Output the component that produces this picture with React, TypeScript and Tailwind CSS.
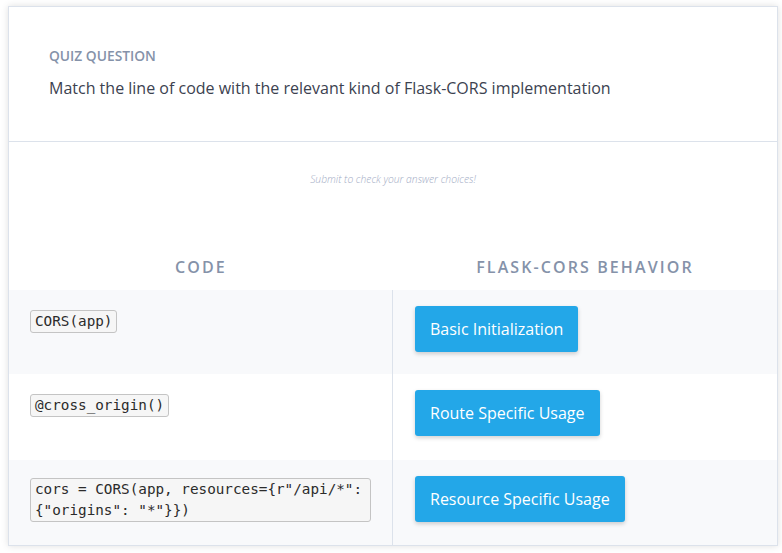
const rows = [
  { code: 'CORS(app)', answer: 'Basic Initialization', h: 'h-[84px]', bg: 'bg-[#f8f9fb]' },
  { code: '@cross_origin()', answer: 'Route Specific Usage', h: 'h-[86px]', bg: 'bg-white' },
  {
    code: 'cors = CORS(app, resources={r"/api/*": {"origins": "*"}})',
    answer: 'Resource Specific Usage',
    h: 'h-[85px]',
    bg: 'bg-[#f8f9fb]',
  },
];

export default function App() {
  return (
    <div className="min-h-[553px] bg-white px-[8px] pt-[6px] font-['Open_Sans',sans-serif]">
      <div className="w-[770px] border border-[#dce2eb] bg-white shadow-[0_0_7px_rgba(0,0,0,0.13)]">
        {/* question header */}
        <div className="border-b border-[#dce2eb] px-[40px] pb-[41px] pt-[40px]">
          <div className="text-[13.8px] font-semibold uppercase leading-[18px] text-[#8592a9]">
            Quiz Question
          </div>
          <div className="mt-[11px] text-[16px] leading-[24px] text-[#3c4250]">
            Match the line of code with the relevant kind of Flask-CORS implementation
          </div>
        </div>

        <div className="pt-[29px] text-center text-[10.3px] font-light italic leading-[16px] text-[#a2abc4]">
          Submit to check your answer choices!
        </div>

        {/* column headings */}
        <div className="mt-[69px] grid grid-cols-2 pb-[12px]">
          <div className="text-center text-[16px] font-semibold uppercase leading-[22px] tracking-[2.1px] text-[#8592a9]">
            Code
          </div>
          <div className="text-center text-[16px] font-semibold uppercase leading-[22px] tracking-[2.1px] text-[#8592a9]">
            Flask-CORS Behavior
          </div>
        </div>

        {rows.map((r) => (
          <div key={r.code} className={`grid grid-cols-2 ${r.h} ${r.bg}`}>
            <div className="border-r border-[#dce2eb] px-[21px] pt-[18px]">
              <code className="inline-block rounded-[3px] border border-[#c4c4c4] bg-[#f6f6f6] px-[4px] font-['DejaVu_Sans_Mono',monospace] text-[14.3px] leading-[21px] text-[#2b2b2b] [overflow-wrap:anywhere]">
                {r.code}
              </code>
            </div>
            <div className="pl-[22px] pt-[16px]">
              <button
                type="button"
                className="h-[46px] rounded-[3px] bg-[#23a7e8] px-[15px] text-[16px] text-white shadow-[0_2px_4px_rgba(0,0,0,0.18)]"
              >
                {r.answer}
              </button>
            </div>
          </div>
        ))}
      </div>
    </div>
  );
}
